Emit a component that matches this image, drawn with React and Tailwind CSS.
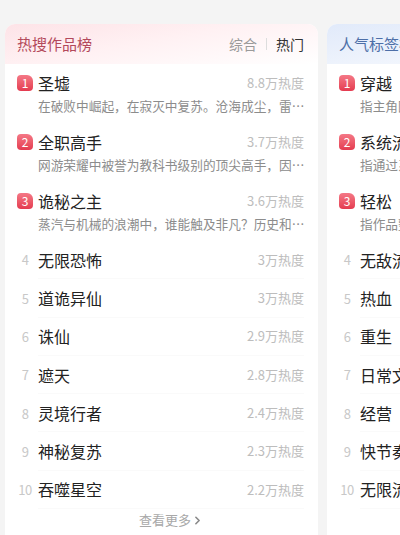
import { ChevronRight } from "lucide-react";

const hotList = [
  { rank: 1, title: "圣墟", heat: "8.8万热度", desc: "在破败中崛起，在寂灭中复苏。沧海成尘，雷电枯竭，那一缕幽雾又一次临近大地" },
  { rank: 2, title: "全职高手", heat: "3.7万热度", desc: "网游荣耀中被誉为教科书级别的顶尖高手，因为种种原因遭到俱乐部的驱逐" },
  { rank: 3, title: "诡秘之主", heat: "3.6万热度", desc: "蒸汽与机械的浪潮中，谁能触及非凡？历史和黑暗的迷雾里，又是谁在耳语" },
  { rank: 4, title: "无限恐怖", heat: "3万热度" },
  { rank: 5, title: "道诡异仙", heat: "3万热度" },
  { rank: 6, title: "诛仙", heat: "2.9万热度" },
  { rank: 7, title: "遮天", heat: "2.8万热度" },
  { rank: 8, title: "灵境行者", heat: "2.4万热度" },
  { rank: 9, title: "神秘复苏", heat: "2.3万热度" },
  { rank: 10, title: "吞噬星空", heat: "2.2万热度" },
];

const tagList = [
  { rank: 1, title: "穿越", heat: "9.1万热度", desc: "指主角因为某种原因穿越到另一个时空的作品" },
  { rank: 2, title: "系统流", heat: "6.4万热度", desc: "指通过系统辅助主角不断成长变强的作品" },
  { rank: 3, title: "轻松", heat: "5.2万热度", desc: "指作品整体风格轻松愉快，读来毫无压力" },
  { rank: 4, title: "无敌流", heat: "4.8万热度" },
  { rank: 5, title: "热血", heat: "4.1万热度" },
  { rank: 6, title: "重生", heat: "3.9万热度" },
  { rank: 7, title: "日常文", heat: "3.2万热度" },
  { rank: 8, title: "经营", heat: "2.7万热度" },
  { rank: 9, title: "快节奏", heat: "2.5万热度" },
  { rank: 10, title: "无限流", heat: "2.1万热度" },
];

function RankMark({ rank }) {
  if (rank <= 3) {
    return (
      <span className="w-[16px] h-[16px] shrink-0 rounded-[4px] rounded-tr-[6px] bg-gradient-to-b from-[#f47786] to-[#e43a50] text-white text-[12px] leading-[16px] text-center">
        {rank}
      </span>
    );
  }
  return (
    <span className="w-[16px] shrink-0 text-center text-[13px] text-[#c8c8c8] tracking-[-0.5px]">
      {rank}
    </span>
  );
}

function RankCard({ title, titleColor, headerBg, list, tabs }) {
  return (
    <div className="w-[313px] shrink-0 h-[540px] bg-white rounded-[10px] overflow-hidden">
      {/* HEADER */}
      <div className={`h-[40px] px-[12px] pr-[14px] flex items-center justify-between ${headerBg}`}>
        <span className={`text-[15px] ${titleColor}`}>{title}</span>
        {tabs && (
          <div className="flex items-center text-[14px]">
            <span className="text-[#9a9a9a]">综合</span>
            <span className="mx-[9px] w-px h-[12px] bg-[#dddddd]"></span>
            <span className="text-[#333333]">热门</span>
          </div>
        )}
      </div>

      {/* LIST */}
      <div className="px-[12px] pr-[14px]">
        {list.map((item) =>
          item.desc ? (
            <div key={item.rank} className="h-[59px] pt-[6px]">
              <div className="h-[26px] flex items-center">
                <RankMark rank={item.rank} />
                <span className="ml-[5px] text-[16px] text-[#222222] flex-1">{item.title}</span>
                <span className="text-[13px] text-[#bdbdbd]">{item.heat}</span>
              </div>
              <div className="h-[20px] pl-[21px] -mr-[3px] text-[12.7px] leading-[20px] text-[#8c8c8c] truncate">
                {item.desc}
              </div>
            </div>
          ) : (
            <div key={item.rank} className="h-[38.3px] flex items-center">
              <RankMark rank={item.rank} />
              <div className="ml-[5px] flex-1 h-full flex items-center border-b border-[#fafafa]">
                <span className="text-[16px] text-[#222222] flex-1">{item.title}</span>
                <span className="text-[13px] text-[#bdbdbd]">{item.heat}</span>
              </div>
            </div>
          )
        )}
        <div className="h-[22px] flex items-center justify-center pl-[22px] text-[13px] text-[#a8a8a8]">
          查看更多
          <ChevronRight size={13} strokeWidth={3} className="text-[#8a8a8a]" />
        </div>
      </div>
    </div>
  );
}

export default function App() {
  return (
    <div
      className="w-[400px] h-[535px] bg-[#f4f4f4] overflow-hidden pt-[24px] pl-[5px]"
      style={{ fontFamily: '"Noto Sans CJK SC", "Noto Sans", sans-serif' }}
    >
      <div className="flex gap-[9px]">
        <RankCard
          title="热搜作品榜"
          titleColor="text-[#b3495b]"
          headerBg="bg-[linear-gradient(170deg,#fde3e7_0%,#fff1f3_45%,#ffffff_100%)]"
          list={hotList}
          tabs
        />
        <RankCard
          title="人气标签榜"
          titleColor="text-[#4d6fa8]"
          headerBg="bg-[linear-gradient(170deg,#e1eafa_0%,#eef3fc_45%,#ffffff_100%)]"
          list={tagList}
        />
      </div>
    </div>
  );
}
